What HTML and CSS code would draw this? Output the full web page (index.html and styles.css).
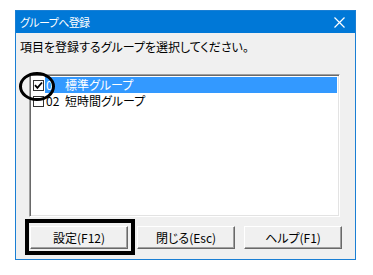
FILE: index.html
```html
<!DOCTYPE html>
<html lang="ja">
<head>
<meta charset="utf-8">
<link rel="stylesheet" href="styles.css">
</head>
<body>
<div class="window">
  <div class="titlebar">
    <span class="title">グループへ登録</span>
    <svg class="close" width="11" height="11" viewBox="0 0 11 11"><path d="M0.5 0.5 L10.5 10.5 M10.5 0.5 L0.5 10.5" stroke="#fff" stroke-width="1.2" fill="none"/></svg>
  </div>
  <div class="body">
    <div class="prompt">項目を登録するグループを選択してください。</div>
    <div class="listbox">
      <div class="row">
        <span class="check checked"><svg width="9" height="9" viewBox="0 0 9 9"><path d="M1 4.2 L3.4 6.8 L8 1.5" stroke="#000" stroke-width="1.8" fill="none"/></svg></span>
        <span class="label selected"><span class="code">0</span><span class="name">標準グループ</span></span>
      </div>
      <div class="row">
        <span class="check"></span>
        <span class="label"><span class="code">02</span><span class="name">短時間グループ</span></span>
      </div>
    </div>
    <div class="buttons">
      <button class="btn">設定(F12)</button>
      <button class="btn">閉じる(Esc)</button>
      <button class="btn">ヘルプ(F1)</button>
    </div>
  </div>
  <div class="mark-circle"></div>
  <div class="mark-rect"></div>
</div>
</body>
</html>
```
FILE: styles.css
```css
html, body {
  margin: 0;
  padding: 0;
  background: #fff;
}
body {
  font-family: "Noto Sans CJK JP", "Noto Sans", sans-serif;
  font-size: 12px;
  font-feature-settings: "palt";
  color: #000;
}
.window {
  position: relative;
  margin: 10px 0 0 15px;
  width: 341px;
  height: 250px;
  box-sizing: border-box;
  border: 1px solid #1a7fd4;
  background: #f0f0f0;
}
.titlebar {
  height: 22px;
  background: #0078d7;
  color: #fff;
  display: flex;
  align-items: center;
  justify-content: space-between;
  padding: 0 10px 0 4px;
  line-height: 14px;
}
.title {
  font-size: 11px;
  letter-spacing: -0.6px;
}
.close {
  display: block;
}
.body {
  padding: 7px 0 0 4px;
}
.prompt {
  line-height: 14px;
  height: 14px;
}
.listbox {
  margin: 20px 0 0 9px;
  width: 311px;
  height: 143px;
  box-sizing: border-box;
  background: #fff;
  border-top: 1px solid #a0a0a0;
  border-left: 1px solid #a0a0a0;
  border-right: 1px solid #fff;
  border-bottom: 1px solid #fff;
  box-shadow: inset 1px 1px 0 #696969, inset -1px -1px 0 #e3e3e3;
  padding: 2px 2px 0 2px;
}
.row {
  display: flex;
  align-items: center;
  height: 16px;
}
.check {
  width: 11px;
  height: 11px;
  box-sizing: border-box;
  border: 1px solid #333;
  background: #fff;
  margin: 0 1px 0 1px;
  display: flex;
  align-items: center;
  justify-content: center;
  flex: none;
}
.check svg {
  display: block;
}
.label {
  flex: 1;
  height: 16px;
  display: flex;
  align-items: center;
  line-height: 14px;
}
.label.selected {
  background: #3399ff;
  color: #fff;
}
.code {
  width: 19px;
  padding-left: 1px;
  flex: none;
}
.buttons {
  display: flex;
  gap: 9px;
  margin: 9px 0 0 10px;
}
.btn {
  width: 98px;
  height: 23px;
  box-sizing: border-box;
  font: inherit;
  font-size: 12px;
  font-feature-settings: "palt";
  color: #000;
  background: #f0f0f0;
  border-top: 1px solid #fff;
  border-left: 1px solid #fff;
  border-right: 1px solid #696969;
  border-bottom: 1px solid #696969;
  box-shadow: inset -1px -1px 0 #a0a0a0;
  padding: 0;
  line-height: 14px;
}
.mark-circle {
  position: absolute;
  left: 3px;
  top: 61px;
  width: 36px;
  height: 29px;
  box-sizing: border-box;
  border: 3px solid #000;
  border-radius: 50%;
}
.mark-rect {
  position: absolute;
  left: 9px;
  top: 208px;
  width: 110px;
  height: 36px;
  box-sizing: border-box;
  border: 4px solid #000;
}
```
